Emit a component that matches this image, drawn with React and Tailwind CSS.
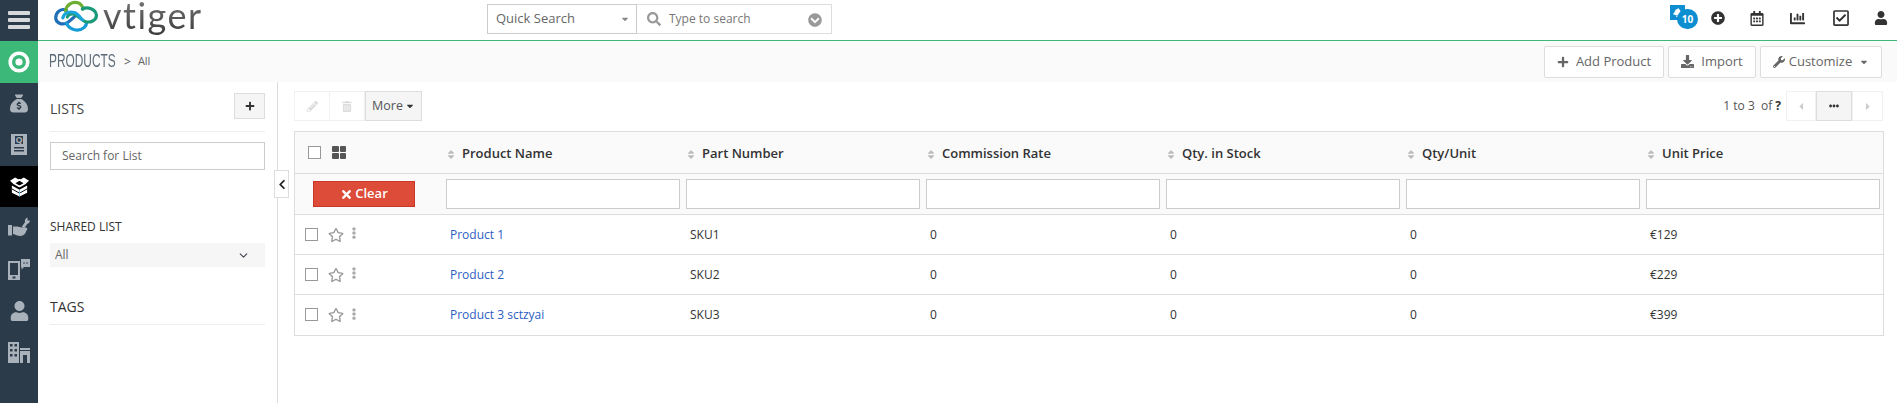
import { FaPlus, FaPencilAlt, FaTrashAlt, FaSort, FaTimes, FaChevronLeft, FaSearch, FaChevronCircleDown, FaPlusCircle, FaRegCalendarAlt, FaChartBar, FaRegCheckSquare, FaUser, FaDownload, FaWrench, FaCaretDown, FaCaretLeft, FaCaretRight, FaEllipsisH, FaEllipsisV, FaRegStar, FaBell } from "react-icons/fa";
import { FaSackDollar } from "react-icons/fa6";
import { LuChevronDown } from "react-icons/lu";

const sans = "font-['Open_Sans',sans-serif]";

const columns = ["Product Name", "Part Number", "Commission Rate", "Qty. in Stock", "Qty/Unit", "Unit Price"];

const rows = [
  ["Product 1", "SKU1", "0", "0", "0", "€129"],
  ["Product 2", "SKU2", "0", "0", "0", "€229"],
  ["Product 3 sctzyai", "SKU3", "0", "0", "0", "€399"],
];

const Logo = () => (
  <svg width="46" height="34" viewBox="0 0 52 38" fill="none" strokeWidth="3.600" strokeLinecap="round">
    <path d="M14 11C7 9 2 14 2 20c0 6 7 8 12 6 3-1 6-5 9-7" stroke="#1f6fb8" />
    <path d="M14 26c4 8 14 10 20 5 2-2 3-4 3-6" stroke="#159bd7" />
    <path d="M13 12C14 5 21 1 27 3c3 1 5 3 6 7" stroke="#6cae2f" />
    <path d="M32 10c6-3 15 0 16 7 0 6-7 9-13 7-5-2-8-7-12-8-3-1-7 0-8 3" stroke="#1a9a78" />
    <path d="M10 20c1-5 7-8 13-6 4 1 6 5 9 8" stroke="#1aa5dc" />
  </svg>
);

const QuoteIcon = () => (
  <svg width="16" height="21" viewBox="0 0 16 21">
    <path fillRule="evenodd" fill="#a9b1bb" d="M0 0h16v21H0zM4 2v8h8V2zM3 13v1.500h10V13zM3 16v1.500h10V16z" />
    <text x="8" y="9" fontSize="9" fontWeight="700" textAnchor="middle" fill="#a9b1bb" fontFamily="Open Sans">Q</text>
  </svg>
);

const TargetIcon = () => (
  <svg width="22" height="22" viewBox="0 0 22 22">
    <circle cx="11" cy="11" r="8.800" fill="none" stroke="#fff" strokeWidth="3.600" />
    <circle cx="11" cy="11" r="3.600" fill="#fff" />
  </svg>
);

const BoxIcon = () => (
  <svg width="21" height="21" viewBox="0 0 22 22">
    <path d="M11 4l6 3.500-6 3.500-6-3.500z" fill="none" stroke="#fff" strokeWidth="1.800" strokeLinejoin="round" />
    <path d="M4.500 8L1 5l5.500-3.500L10.500 4z" fill="#fff" />
    <path d="M17.500 8L21 5l-5.500-3.500L11.500 4z" fill="#fff" />
    <path d="M3 10l8 4.500 8-4.500v7.500L11 21.500l-8-4z" fill="#fff" />
    <path d="M3 13.500l8 4.500 8-4.500" fill="none" stroke="#000" strokeWidth="1" />
    <path d="M11 14.500v7" stroke="#7cc4ea" strokeWidth="1" />
  </svg>
);

const ServiceIcon = () => (
  <svg width="22" height="21" viewBox="0 0 22 21" fill="#a9b1bb">
    <rect x="0" y="8" width="4" height="10.500" />
    <path d="M5 9.500h4c2 0 3 1 5 1h3.500c2 0 2.500 2 1 3-1 3-3 5.500-6 5.500-3 0-5-1.500-7.500-2z" />
    <path d="M15 10.500l3.500-5" fill="none" stroke="#a9b1bb" strokeWidth="3" />
    <path d="M17 5C16.500 3 17.500 1 19.500.5v3h2.500C22 5.500 20 7.500 17.500 7z" />
  </svg>
);

const MobileChatIcon = () => (
  <svg width="22" height="21" viewBox="0 0 22 21">
    <path fillRule="evenodd" fill="#a9b1bb" d="M0 2h12v19H0zM2 4v12h8V4z" />
    <rect x="4.500" y="17.500" width="3" height="2" fill="#2c3b49" />
    <path fill="#a9b1bb" d="M13 0h9v8h-6l-2.500 2.500V8H13z" />
    <circle cx="16" cy="4" r=".8" fill="#2c3b49" />
    <circle cx="19" cy="4" r=".8" fill="#2c3b49" />
  </svg>
);

const BuildingIcon = () => (
  <svg width="22" height="21" viewBox="0 0 22 21">
    <path fillRule="evenodd" fill="#a9b1bb" d="M0 0h11v21H0zM2 2v2.500h2.500V2zM6.500 2v2.500H9V2zM2 7v2.500h2.500V7zM6.500 7v2.500H9V7zM2 12v2.500h2.500V12zM6.500 12v2.500H9V12z" />
    <path fill="#a9b1bb" d="M12 6h10v2H12zM12 9h10v12h-3v-8h-4v8h-3z" />
  </svg>
);

const RailItem = ({ className = "bg-[#2c3b49]", children }) => (
  <div className={`flex h-[41.500px] items-center justify-center ${className}`}>{children}</div>
);

const Rail = () => (
  <aside className="flex w-[38px] shrink-0 flex-col bg-[#2c3b49]">
    <div className="flex h-[40px] flex-col items-center justify-center gap-[3px]">
      <span className="h-[4px] w-[22px] rounded-[1px] bg-[#d7dadd]" />
      <span className="h-[4px] w-[22px] rounded-[1px] bg-[#d7dadd]" />
      <span className="h-[4px] w-[22px] rounded-[1px] bg-[#d7dadd]" />
    </div>
    <RailItem className="mt-px bg-[#3cb878]"><TargetIcon /></RailItem>
    <RailItem><FaSackDollar className="h-[21px] w-[18px] text-[#a9b1bb]" /></RailItem>
    <RailItem><QuoteIcon /></RailItem>
    <RailItem className="bg-black"><BoxIcon /></RailItem>
    <RailItem><ServiceIcon /></RailItem>
    <RailItem><MobileChatIcon /></RailItem>
    <RailItem><FaUser className="h-[20px] w-[21px] text-[#a9b1bb]" /></RailItem>
    <RailItem><BuildingIcon /></RailItem>
  </aside>
);

const TopBar = () => (
  <header className="flex h-[41px] items-start border-b border-[#3cb878] bg-white">
    <div className="ml-[16px] flex items-start">
      <Logo />
      <span className="ml-[3px] bg-gradient-to-b from-[#777] to-[#333] bg-clip-text pb-[10px] font-['Lato',sans-serif] text-[36px] leading-[30px] tracking-[1.500px] text-transparent">
        vtiger
      </span>
    </div>
    <div className="absolute left-[487px] top-[4px] flex h-[30px] text-[#666]">
      <div className={`flex w-[150px] items-center justify-between border border-[#ccc] pl-[8px] pr-[6px] text-[13px] ${sans}`}>
        Quick Search
        <FaCaretDown className="h-[10px] w-[10px] text-[#888]" />
      </div>
      <div className={`flex w-[195px] items-center border border-l-0 border-[#ddd] pl-[10px] pr-[9px] text-[12px] ${sans}`}>
        <FaSearch className="h-[14px] w-[14px] text-[#999]" />
        <span className="ml-[8px] flex-1 text-[#777]">Type to search</span>
        <FaChevronCircleDown className="mt-[2px] h-[14px] w-[14px] text-[#999]" />
      </div>
    </div>
    <div className="ml-auto flex h-[36px] items-center pr-[9px] text-[#333]">
      <div className="relative h-[24px] w-[29px]">
        <div className="absolute left-0 top-[-1px] flex h-[15px] w-[15px] items-center justify-center bg-[#0d8ed1]">
          <FaBell className="h-[9px] w-[9px] rotate-12 text-white" />
        </div>
        <span className={`absolute left-[7px] top-[3px] flex h-[20px] w-[21px] items-center justify-center rounded-full bg-[#0d8ed1] text-[10px] font-bold text-white ${sans}`}>10</span>
      </div>
      <FaPlusCircle className="ml-[12px] h-[14px] w-[14px]" />
      <FaRegCalendarAlt className="ml-[25px] h-[15px] w-[14px]" />
      <FaChartBar className="ml-[25px] h-[15px] w-[17px]" />
      <FaRegCheckSquare className="ml-[26px] h-[18px] w-[18px]" />
      <FaUser className="ml-[24px] h-[14px] w-[14px]" />
    </div>
  </header>
);

const HeaderButton = ({ children, className = "" }) => (
  <button className={`flex h-[32px] items-center justify-center rounded-[2px] border border-[#ddd] bg-white text-[13px] text-[#666] ${sans} ${className}`}>
    {children}
  </button>
);

const PageHeader = () => (
  <div className="flex h-[41px] items-center bg-[#fafafa] pl-[11px] pr-[15px]">
    <span className="mr-[-33px] inline-block origin-left scale-x-[.66] font-['Liberation_Sans',sans-serif] text-[18px] text-[#5d6b78]">PRODUCTS</span>
    <span className={`ml-[7px] text-[12px] text-[#555] ${sans}`}>&gt;</span>
    <span className={`ml-[7px] text-[11px] text-[#666] ${sans}`}>All</span>
    <div className="ml-auto flex gap-[4px]">
      <HeaderButton className="w-[120px] gap-[7px]"><FaPlus className="h-[12px] w-[12px]" />Add Product</HeaderButton>
      <HeaderButton className="w-[88px] gap-[7px]"><FaDownload className="h-[13px] w-[13px]" />Import</HeaderButton>
      <HeaderButton className="w-[122px] gap-[4px]"><FaWrench className="h-[12px] w-[12px]" />Customize<FaCaretDown className="ml-[3px] h-[10px] w-[10px]" /></HeaderButton>
    </div>
  </div>
);

const Lists = () => (
  <div className={`relative w-[240px] shrink-0 border-r border-[#ddd] pl-[12px] pr-[12px] ${sans}`}>
    <div className="flex h-[50px] items-start justify-between border-b border-[#eee] pt-[11px]">
      <span className="mt-[6px] text-[14px] leading-[20px] text-[#444]">LISTS</span>
      <button className="flex h-[26px] w-[31px] items-center justify-center border border-[#ddd] bg-[#f5f5f5]">
        <FaPlus className="h-[10px] w-[10px] text-[#333]" />
      </button>
    </div>
    <div className="mt-[10px] flex h-[28px] items-center border border-[#ccc] pl-[11px] text-[12px] text-[#666]">Search for List</div>
    <div className="mt-[49px] text-[12px] leading-[16px] text-[#333]">SHARED LIST</div>
    <div className="mt-[8px] flex h-[24px] items-center justify-between bg-[#f6f6f6] pl-[5px] pr-[15px] text-[12px] text-[#666]">
      All
      <LuChevronDown className="h-[13px] w-[13px] text-[#445]" />
    </div>
    <div className="mt-[30px] h-[28px] border-b border-[#eee] text-[14px] leading-[20px] text-[#333]">TAGS</div>
    <div className="absolute right-[-12px] top-[88px] flex h-[28px] w-[15px] items-center justify-center border border-[#ddd] bg-white">
      <FaChevronLeft className="h-[11px] w-[8px] text-[#222]" />
    </div>
  </div>
);

const Box = () => <span className="h-[13px] w-[13px] border border-[#999] bg-white" />;

const gridCols = "grid grid-cols-[148px_repeat(6,240px)]";

const ProductsTable = () => (
  <div className={`mt-[10px] w-[1590px] border border-[#ddd] ${sans}`}>
    <div className={`${gridCols} h-[42px] items-center border-b border-[#ddd] bg-[#fafafa]`}>
      <div className="flex items-center pl-[13px]">
        <Box />
        <span className="ml-[11px] grid h-[13px] w-[14px] grid-cols-2 gap-[1px]">
          <span className="rounded-[1px] bg-[#555]" />
          <span className="rounded-[1px] bg-[#555]" />
          <span className="rounded-[1px] bg-[#555]" />
          <span className="rounded-[1px] bg-[#555]" />
        </span>
      </div>
      {columns.map((col) => (
        <div key={col} className="mt-[3px] flex items-center pl-[4px] text-[13px] font-semibold text-[#333]">
          <FaSort className="h-[11px] w-[8px] text-[#bbb]" />
          <span className="ml-[7px]">{col}</span>
        </div>
      ))}
    </div>
    <div className={`${gridCols} h-[41px] items-center border-b border-[#ddd] bg-[#fafafa]`}>
      <div className="pl-[18px]">
        <button className="flex h-[26px] w-[102px] items-center justify-center gap-[2px] border border-[#c9362a] bg-[#dd4b39] text-[13px] font-semibold text-white">
          <FaTimes className="h-[13px] w-[13px]" />Clear
        </button>
      </div>
      {columns.map((col) => (
        <div key={col} className="pl-[3px] pr-[3px]">
          <div className="h-[30px] border border-[#ccc] bg-white" />
        </div>
      ))}
    </div>
    {rows.map((row, i) => (
      <div key={row[0]} className={`${gridCols} h-[40px] items-center text-[12px] text-[#333] ${i < rows.length - 1 ? "border-b border-[#ddd]" : ""}`}>
        <div className="-mt-[1px] flex items-center pl-[10px]">
          <Box />
          <FaRegStar className="ml-[10px] mt-[1px] h-[16px] w-[16px] text-[#999]" />
          <FaEllipsisV className="ml-[5px] -mt-[2px] h-[12px] w-[10px] text-[#aaa]" />
        </div>
        {row.map((cell, j) => (
          <div key={j} className={`pl-[7px] ${j === 0 ? "text-[#2d5ec4]" : ""}`}>{cell}</div>
        ))}
      </div>
    ))}
  </div>
);

const Toolbar = () => (
  <div className={`flex h-[30px] items-center pr-[14px] ${sans}`}>
    <div className="flex h-[30px] w-[36px] items-center justify-center border border-[#f1f1f1]">
      <FaPencilAlt className="h-[11px] w-[11px] text-[#ddd]" />
    </div>
    <div className="flex h-[30px] w-[35px] items-center justify-center border border-l-0 border-[#f1f1f1]">
      <FaTrashAlt className="h-[11px] w-[10px] text-[#ddd]" />
    </div>
    <div className="flex h-[30px] w-[57px] items-center justify-center gap-[2px] border border-[#ddd] bg-[#f5f5f5] text-[12.500px] text-[#555]">
      More<FaCaretDown className="h-[10px] w-[10px] text-[#333]" />
    </div>
    <div className="ml-auto flex items-center text-[12px] text-[#555]">
      1 to 3&nbsp; of <b className="ml-[3px] text-[#333]">?</b>
      <div className="ml-[5px] flex h-[30px]">
        <div className="flex w-[30px] items-center justify-center border border-[#f1f1f1]">
          <FaCaretLeft className="h-[11px] w-[8px] text-[#ccc]" />
        </div>
        <div className="flex w-[36px] items-center justify-center border border-[#ddd] bg-[#f5f5f5]">
          <FaEllipsisH className="h-[10px] w-[10px] text-[#333]" />
        </div>
        <div className="flex w-[31px] items-center justify-center border border-[#f1f1f1]">
          <FaCaretRight className="h-[11px] w-[8px] text-[#ccc]" />
        </div>
      </div>
    </div>
  </div>
);

export default function App() {
  return (
    <div className="relative flex h-[403px] w-[1897px] overflow-hidden bg-white">
      <Rail />
      <div className="flex min-w-0 flex-1 flex-col">
        <TopBar />
        <PageHeader />
        <div className="flex flex-1">
          <Lists />
          <main className="min-w-0 flex-1 pl-[16px] pt-[9px]">
            <Toolbar />
            <ProductsTable />
          </main>
        </div>
      </div>
    </div>
  );
}
